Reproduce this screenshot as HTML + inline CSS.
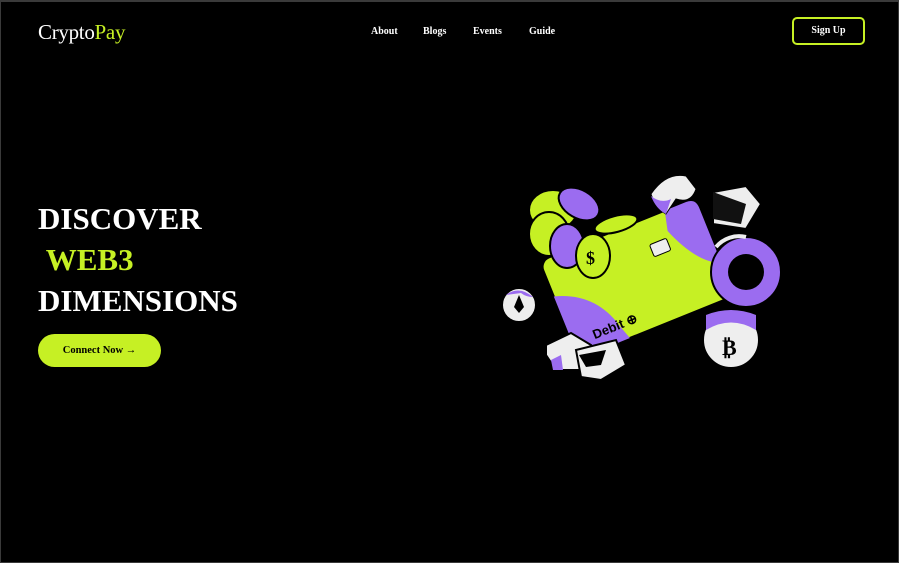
<!DOCTYPE html>
<html><head><meta charset="utf-8"><style>
*{margin:0;padding:0;box-sizing:border-box}
html,body{width:899px;height:563px;background:#000;overflow:hidden}
body{position:relative;font-family:"Liberation Serif",serif;color:#fff;border:1px solid #3a3a3a;border-top:2px solid #3a3a3a}
.logo{position:absolute;left:37px;top:18px;font-size:21px;letter-spacing:-0.3px}
.logo span{color:#c6f024}
nav{position:absolute;top:24px;left:370px;font-size:10px;font-weight:bold}
nav a{position:absolute;white-space:nowrap;color:#fff;text-decoration:none}
.btn{position:absolute;left:791px;top:15px;width:73px;height:28px;border:2px solid #c6f024;border-radius:5px;font-size:10px;font-weight:bold;text-align:center;line-height:24px}
h1{position:absolute;left:37px;top:196px;font-size:31px;line-height:41px;font-weight:bold;letter-spacing:0}
h1 .g{color:#c6f024}
.cta{position:absolute;left:37px;top:332px;width:123px;height:33px;border-radius:17px;background:#c6f024;color:#000;font-size:10.5px;font-weight:bold;text-align:center;line-height:33px}
</style></head><body>
<div class="logo">Crypto<span>Pay</span></div>
<nav><a style="left:0">About</a><a style="left:52px">Blogs</a><a style="left:102px">Events</a><a style="left:158px">Guide</a></nav>
<div class="btn">Sign Up</div>
<h1>DISCOVER<br><span class="g">&nbsp;WEB3</span><br>DIMENSIONS</h1>
<div class="cta">Connect Now →</div>
<svg style="position:absolute;left:490px;top:160px" width="300" height="220" viewBox="0 0 300 220">
<g transform="rotate(-22 150 110)">
<rect x="60" y="62" width="168" height="105" rx="10" fill="#c6f024" stroke="#000" stroke-width="2"/>
<path d="M60 100 Q100 112 110 152 L115 167 L70 167 Q60 167 60 157Z" fill="#9b6cf0"/>
<path d="M190 82 Q205 122 228 132 L228 72 Q228 62 218 62 L195 62Z" fill="#9b6cf0"/>
<rect x="168" y="88" width="18" height="13" rx="2" fill="#eee" stroke="#000"/>
<text x="82" y="155" font-family="Liberation Sans,sans-serif" font-weight="bold" font-size="13" fill="#000">Debit ⊕</text>
</g>
<g stroke="#000" stroke-width="2">
<ellipse cx="62" cy="48" rx="24" ry="20" fill="#c6f024"/>
<ellipse cx="88" cy="42" rx="22" ry="14" fill="#9b6cf0" transform="rotate(30 88 42)"/>
<ellipse cx="58" cy="72" rx="20" ry="22" fill="#c6f024"/>
<ellipse cx="76" cy="84" rx="17" ry="22" fill="#9b6cf0"/>
<ellipse cx="102" cy="94" rx="17" ry="22" fill="#c6f024"/>
<ellipse cx="125" cy="62" rx="22" ry="8" fill="#c6f024" transform="rotate(-15 125 62)"/>
<text x="95" y="102" font-size="18" font-weight="bold" fill="#000" stroke="none">$</text>
</g>
<circle cx="255" cy="110" r="35" fill="#9b6cf0" stroke="#000" stroke-width="2"/>
<circle cx="255" cy="110" r="18" fill="#000"/>
<path d="M225 85 a30 30 0 0 1 30 -10" stroke="#eee" stroke-width="4" fill="none"/>
<circle cx="240" cy="178" r="28" fill="#eee" stroke="#000" stroke-width="2"/>
<path d="M215 168 Q240 153 265 168 L265 153 Q240 143 215 153Z" fill="#9b6cf0"/>
<text x="231" y="193" font-size="22" font-weight="bold" fill="#000">₿</text>
<path d="M222 30 L255 24 L270 42 L255 67 L222 62Z" fill="#eee" stroke="#000" stroke-width="2"/>
<path d="M222 30 L255 42 L250 62 L222 57Z" fill="#111"/>
<path d="M160 32 Q175 10 195 14 L205 27 Q200 42 185 37 L175 52 Q165 47 160 32Z" fill="#eee" stroke="#000"/>
<path d="M160 34 Q170 42 180 37 L175 52 Q165 47 160 34Z" fill="#9b6cf0"/>
<circle cx="28" cy="143" r="17" fill="#eee" stroke="#000" stroke-width="2"/>
<path d="M15 133 Q28 123 42 135 Q35 135 30 131Z" fill="#9b6cf0"/>
<path d="M28 133 L23 145 L28 151 L33 145Z" fill="#000"/>
<path d="M55 183 L80 171 L100 183 L95 208 L65 208 L55 193Z" fill="#eee" stroke="#000" stroke-width="2"/>
<path d="M85 188 L125 178 L135 203 L110 218 L90 215Z" fill="#eee" stroke="#000" stroke-width="2"/>
<path d="M88 193 L115 188 L110 203 L95 205Z" fill="#000"/>
<path d="M60 198 L70 193 L72 208 L62 208Z" fill="#9b6cf0"/>
</svg>
</body></html>
